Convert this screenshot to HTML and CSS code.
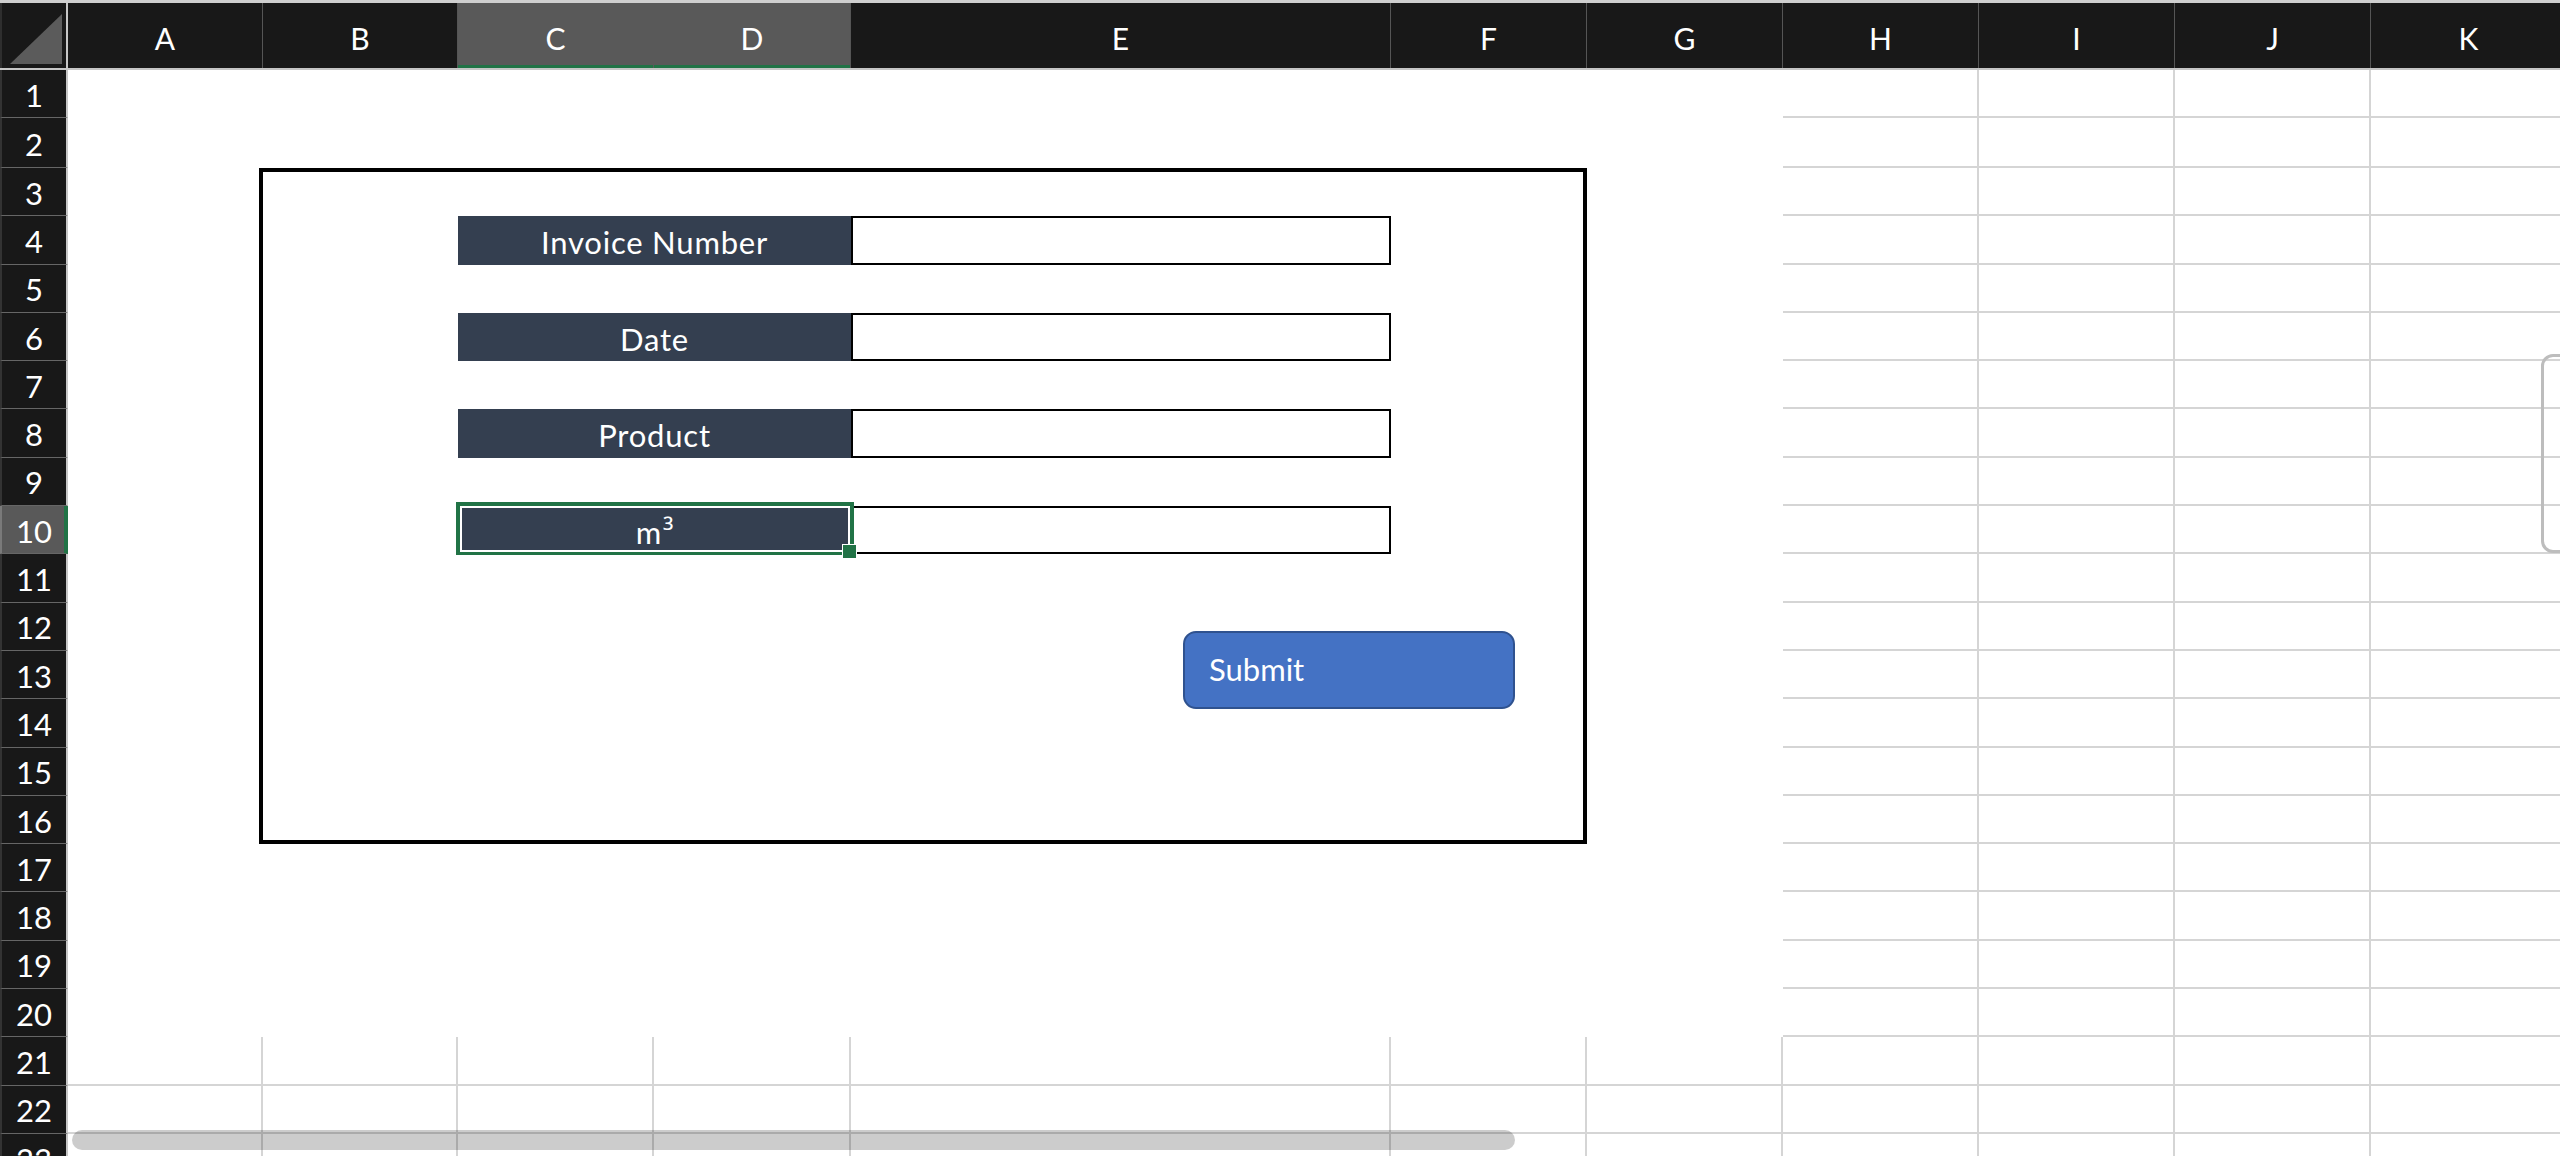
FILE: index.html
```
<!DOCTYPE html>
<html lang="en">
<head>
<meta charset="utf-8">
<title>Invoice form</title>
<link rel="stylesheet" href="styles.css">
</head>
<body>
<div class="sheet">
  <div class="row hdr">
    <div class="corner"><div class="tri"></div></div>
    <div class="ch">A</div><div class="ch">B</div><div class="ch sel nosep">C</div><div class="ch sel">D</div><div class="ch">E</div><div class="ch">F</div><div class="ch">G</div><div class="ch">H</div><div class="ch">I</div><div class="ch">J</div><div class="ch">K</div>
  </div>

  <div class="row r1"><div class="rh">1</div><div class="c"></div><div class="c"></div><div class="c"></div><div class="c"></div><div class="c"></div><div class="c"></div><div class="c"></div><div class="c g"></div><div class="c g"></div><div class="c g"></div><div class="c g"></div></div>
  <div class="row r2"><div class="rh">2</div><div class="c"></div><div class="c"></div><div class="c"></div><div class="c"></div><div class="c"></div><div class="c"></div><div class="c"></div><div class="c g"></div><div class="c g"></div><div class="c g"></div><div class="c g"></div></div>
  <div class="row rn"><div class="rh">3</div><div class="c bl"></div><div class="c bt"></div><div class="c bt"></div><div class="c bt"></div><div class="c bt"></div><div class="c bt br"></div><div class="c"></div><div class="c g"></div><div class="c g"></div><div class="c g"></div><div class="c g"></div></div>
  <div class="row rn"><div class="rh">4</div><div class="c bl"></div><div class="c"></div><div class="lab">Invoice Number</div><div class="c inp"></div><div class="c br"></div><div class="c"></div><div class="c g"></div><div class="c g"></div><div class="c g"></div><div class="c g"></div></div>
  <div class="row rn"><div class="rh">5</div><div class="c bl"></div><div class="c"></div><div class="c"></div><div class="c"></div><div class="c"></div><div class="c br"></div><div class="c"></div><div class="c g"></div><div class="c g"></div><div class="c g"></div><div class="c g"></div></div>
  <div class="row rn"><div class="rh">6</div><div class="c bl"></div><div class="c"></div><div class="lab">Date</div><div class="c inp"></div><div class="c br"></div><div class="c"></div><div class="c g"></div><div class="c g"></div><div class="c g"></div><div class="c g"></div></div>
  <div class="row rn"><div class="rh">7</div><div class="c bl"></div><div class="c"></div><div class="c"></div><div class="c"></div><div class="c"></div><div class="c br"></div><div class="c"></div><div class="c g"></div><div class="c g"></div><div class="c g"></div><div class="c g"></div></div>
  <div class="row rn"><div class="rh">8</div><div class="c bl"></div><div class="c"></div><div class="lab">Product</div><div class="c inp"></div><div class="c br"></div><div class="c"></div><div class="c g"></div><div class="c g"></div><div class="c g"></div><div class="c g"></div></div>
  <div class="row rn"><div class="rh">9</div><div class="c bl"></div><div class="c"></div><div class="c"></div><div class="c"></div><div class="c"></div><div class="c br"></div><div class="c"></div><div class="c g"></div><div class="c g"></div><div class="c g"></div><div class="c g"></div></div>
  <div class="row rn"><div class="rh sel">10</div><div class="c bl"></div><div class="c"></div><div class="lab sel">m<span class="sup">³</span></div><div class="c inp"></div><div class="c br"></div><div class="c"></div><div class="c g"></div><div class="c g"></div><div class="c g"></div><div class="c g"></div></div>
  <div class="row rn"><div class="rh">11</div><div class="c bl"></div><div class="c"></div><div class="c"></div><div class="c"></div><div class="c"></div><div class="c br"></div><div class="c"></div><div class="c g"></div><div class="c g"></div><div class="c g"></div><div class="c g"></div></div>
  <div class="row rn"><div class="rh">12</div><div class="c bl"></div><div class="c"></div><div class="c"></div><div class="c"></div><div class="c"></div><div class="c br"></div><div class="c"></div><div class="c g"></div><div class="c g"></div><div class="c g"></div><div class="c g"></div></div>
  <div class="row rn"><div class="rh">13</div><div class="c bl"></div><div class="c"></div><div class="c"></div><div class="c"></div><div class="c"></div><div class="c br"></div><div class="c"></div><div class="c g"></div><div class="c g"></div><div class="c g"></div><div class="c g"></div></div>
  <div class="row rn"><div class="rh">14</div><div class="c bl"></div><div class="c"></div><div class="c"></div><div class="c"></div><div class="c"></div><div class="c br"></div><div class="c"></div><div class="c g"></div><div class="c g"></div><div class="c g"></div><div class="c g"></div></div>
  <div class="row rn"><div class="rh">15</div><div class="c bl"></div><div class="c"></div><div class="c"></div><div class="c"></div><div class="c"></div><div class="c br"></div><div class="c"></div><div class="c g"></div><div class="c g"></div><div class="c g"></div><div class="c g"></div></div>
  <div class="row rn"><div class="rh">16</div><div class="c bl"></div><div class="c bb"></div><div class="c bb"></div><div class="c bb"></div><div class="c bb"></div><div class="c bb br"></div><div class="c"></div><div class="c g"></div><div class="c g"></div><div class="c g"></div><div class="c g"></div></div>
  <div class="row rn"><div class="rh">17</div><div class="c"></div><div class="c"></div><div class="c"></div><div class="c"></div><div class="c"></div><div class="c"></div><div class="c"></div><div class="c g"></div><div class="c g"></div><div class="c g"></div><div class="c g"></div></div>
  <div class="row rn"><div class="rh">18</div><div class="c"></div><div class="c"></div><div class="c"></div><div class="c"></div><div class="c"></div><div class="c"></div><div class="c"></div><div class="c g"></div><div class="c g"></div><div class="c g"></div><div class="c g"></div></div>
  <div class="row rn"><div class="rh">19</div><div class="c"></div><div class="c"></div><div class="c"></div><div class="c"></div><div class="c"></div><div class="c"></div><div class="c"></div><div class="c g"></div><div class="c g"></div><div class="c g"></div><div class="c g"></div></div>
  <div class="row rn"><div class="rh">20</div><div class="c"></div><div class="c"></div><div class="c"></div><div class="c"></div><div class="c"></div><div class="c"></div><div class="c"></div><div class="c g"></div><div class="c g"></div><div class="c g"></div><div class="c g"></div></div>
  <div class="row rn"><div class="rh">21</div><div class="c g"></div><div class="c g"></div><div class="c g"></div><div class="c g"></div><div class="c g"></div><div class="c g"></div><div class="c g"></div><div class="c g"></div><div class="c g"></div><div class="c g"></div><div class="c g"></div></div>
  <div class="row rn"><div class="rh">22</div><div class="c g"></div><div class="c g"></div><div class="c g"></div><div class="c g"></div><div class="c g"></div><div class="c g"></div><div class="c g"></div><div class="c g"></div><div class="c g"></div><div class="c g"></div><div class="c g"></div></div>
  <div class="row rn"><div class="rh">23</div><div class="c g"></div><div class="c g"></div><div class="c g"></div><div class="c g"></div><div class="c g"></div><div class="c g"></div><div class="c g"></div><div class="c g"></div><div class="c g"></div><div class="c g"></div><div class="c g"></div></div>

  <div class="submit">Submit</div>
  <div class="side-tab"></div>
  <div class="hscroll"></div>
</div>
</body>
</html>
```
FILE: styles.css
```
* {
  box-sizing: border-box;
  margin: 0;
  padding: 0;
}

html, body {
  width: 2560px;
  height: 1156px;
  overflow: hidden;
  background: #ffffff;
}

body {
  font-family: Lato, "Open Sans", "Liberation Sans", sans-serif;
  color: #ffffff;
}

.sheet {
  position: relative;
  width: 2560px;
  height: 1156px;
  overflow: hidden;
  display: flex;
  flex-direction: column;
}

.row {
  flex: none;
  width: 2567px;
  display: grid;
  grid-template-columns: 68px 195px 195px 196px 197px 540px 196px 196px 196px 196px 196px 196px;
}

.hdr {
  height: 70px;
  background: #181818;
  border-top: 3px solid #cfcfcf;
  border-bottom: 2px solid #c6c6c6;
}

.r1 { height: 48px; }
.r2 { height: 50px; }
.rn { height: 48.3px; }

/* header */
.corner {
  border-right: 2px solid #c6c6c6;
  border-left: 2px solid #2e2e2e;
  display: flex;
  align-items: flex-end;
  justify-content: flex-end;
  padding: 0 4px 4px 0;
}

.tri {
  width: 52px;
  height: 50px;
  background: #5b5b5b;
  clip-path: polygon(100% 0, 100% 100%, 0 100%);
}

.ch {
  display: flex;
  align-items: center;
  justify-content: center;
  padding-top: 5px;
  font-size: 30px;
  border-right: 1px solid #555555;
}

.ch.sel {
  background: #595959;
  box-shadow: inset 0 -3px 0 #217346;
}

.ch.nosep {
  border-right-color: #595959;
}

/* row header */
.rh {
  background: #181818;
  border-left: 2px solid #333333;
  border-right: 2px solid #c6c6c6;
  border-bottom: 1px solid #666666;
  display: flex;
  align-items: center;
  justify-content: center;
  font-size: 31px;
  padding-top: 2px;
}

.rh.sel {
  background: #595959;
  border-left-color: #7a7a7a;
  border-right: 4px solid #217346;
  padding-left: 2px;
}

/* cells */
.c {
  background: #ffffff;
}

.g {
  border-right: 2px solid #d5d5d5;
  border-bottom: 2px solid #d5d5d5;
}

.bl { border-right: 4px solid #000000; }
.bt { border-top: 4px solid #000000; }
.br { border-right: 4px solid #000000; }
.bb { border-bottom: 4px solid #000000; }

.inp {
  border: 2px solid #000000;
}

.lab {
  grid-column: span 2;
  background: #343f50;
  color: #ffffff;
  font-size: 31px;
  letter-spacing: 0.8px;
  display: flex;
  align-items: center;
  justify-content: center;
  padding-top: 3px;
}

.sup {
  font-family: "Open Sans", "DejaVu Sans", sans-serif;
  font-size: 30px;
  letter-spacing: 0;
  margin-left: 1px;
  position: relative;
  top: -1px;
}

.lab.sel {
  position: relative;
  z-index: 2;
}

.lab.sel::before {
  content: "";
  position: absolute;
  left: -2px;
  top: -4px;
  right: -3px;
  bottom: -1px;
  border: 4px solid #217346;
  border-bottom-width: 3px;
  box-shadow: inset 0 0 0 2px #ffffff;
}

.lab.sel::after {
  content: "";
  position: absolute;
  right: -6px;
  bottom: -5px;
  width: 13px;
  height: 13px;
  background: #217346;
  border: 1px solid #ffffff;
}

/* floating shapes */
.submit {
  position: absolute;
  left: 1183px;
  top: 631px;
  width: 332px;
  height: 78px;
  background: #4472c4;
  border: 2px solid #2f528f;
  border-radius: 13px;
  color: #ffffff;
  font-size: 31px;
  display: flex;
  align-items: center;
  padding-left: 24px;
  padding-bottom: 2px;
}

.side-tab {
  position: absolute;
  left: 2541px;
  top: 354px;
  width: 40px;
  height: 199px;
  border: 3px solid #bdbdbd;
  border-radius: 12px;
}

.hscroll {
  position: absolute;
  left: 72px;
  top: 1130px;
  width: 1443px;
  height: 20px;
  border-radius: 10px;
  background: rgba(0, 0, 0, 0.2);
}
```
